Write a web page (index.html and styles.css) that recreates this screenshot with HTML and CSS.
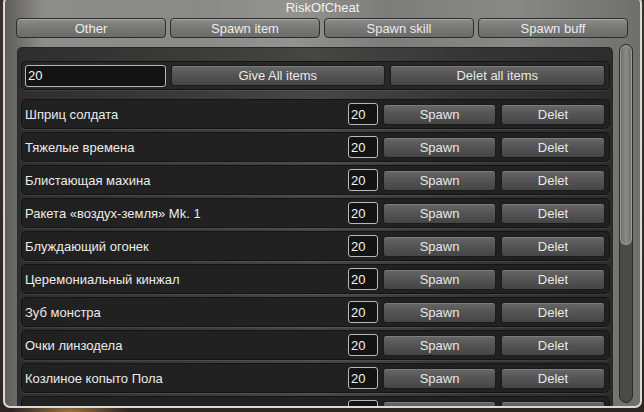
FILE: index.html
```html
<!DOCTYPE html>
<html lang="ru">
<head>
    <meta charset="UTF-8">
    <title>RiskOfCheat</title>
    <link rel="stylesheet" href="styles.css">
</head>
<body>
    <div class="window">
        <div class="title">RiskOfCheat</div>
        <div class="tabs">
            <button class="tab">Other</button>
            <button class="tab">Spawn item</button>
            <button class="tab">Spawn skill</button>
            <button class="tab">Spawn buff</button>
        </div>
        <div class="content">
            <div class="scroll-view">
                <div class="top-row">
                    <input class="field wide" value="20">
                    <button class="btn give">Give All items</button>
                    <button class="btn delall">Delet all items</button>
                </div>
                <div id="items"></div>
            </div>
            <div class="scrollbar"><div class="thumb"></div></div>
        </div>
    </div>

    <script>
        const items = [
            "Шприц солдата",
            "Тяжелые времена",
            "Блистающая махина",
            "Ракета «воздух-земля» Mk. 1",
            "Блуждающий огонек",
            "Церемониальный кинжал",
            "Зуб монстра",
            "Очки линзодела",
            "Козлиное копыто Пола",
            "Личный щит-генератор"
        ];

        const list = document.getElementById("items");
        items.forEach(function (name) {
            let row = document.createElement("div");
            row.classList.add("item-row");
            row.innerHTML = `<span class="item-name">${name}</span>
                             <input class="field small" value="20">
                             <button class="btn spawn">Spawn</button>
                             <button class="btn delet">Delet</button>`;
            list.appendChild(row);
        });
    </script>
</body>
</html>
```

FILE: styles.css
```css
body {
    margin: 0;
    width: 644px;
    height: 412px;
    overflow: hidden;
    font-family: "Liberation Sans", Arial, sans-serif;
    font-size: 13px;
    background: radial-gradient(ellipse 60px 14px at 70px 412px, #9a7440, transparent),
                linear-gradient(#3a302c, #2e2522);
}
.window {
    box-sizing: border-box;
    margin-left: 3px;
    margin-top: -4px;
    width: 639px;
    height: 412px;
    border: 2px solid #d9d9d6;
    border-radius: 7px;
    background: linear-gradient(90deg, #5f5d5b 0%, #8d8d89 6%, #8a8a86 30%, #93938f 45%, #7d7d7a 60%, #888884 80%, #6f6f6c 100%);
    display: flex;
    flex-direction: column;
    overflow: hidden;
}
.title {
    height: 18px;
    line-height: 16px;
    padding-top: 2px;
    text-align: center;
    color: #f2f2f2;
}
.tabs {
    display: flex;
    gap: 4px;
    padding-left: 11px;
    height: 20px;
}
.tab {
    width: 150px;
    height: 20px;
    padding: 0;
    font: inherit;
    color: #ececec;
    border: 1px solid #2c2c2c;
    border-radius: 4px;
    background: linear-gradient(#8c8c89, #777775 50%, #6b6b69);
    box-shadow: inset 0 1px 0 rgba(255, 255, 255, 0.25);
}
.content {
    display: flex;
    gap: 6px;
    padding: 6px 0 0 12px;
    flex: 1;
    min-height: 0;
}
.scroll-view {
    box-sizing: border-box;
    width: 596px;
    margin-top: 3px;
    padding: 13px 2px 0 3px;
    border: 1px solid #262626;
    border-bottom: none;
    border-radius: 5px 5px 0 0;
    background: linear-gradient(90deg, #2e2e2e 0%, #3b3b3a 30%, #464645 50%, #363636 75%, #2c2c2c 100%);
    overflow: hidden;
}
.top-row, .item-row {
    box-sizing: border-box;
    display: flex;
    align-items: center;
    border: 1px solid #141414;
    border-radius: 5px;
    background: #212121;
    box-shadow: 0 1px 0 rgba(255, 255, 255, 0.08);
}
.top-row {
    height: 29px;
    padding: 0 4px 0 3px;
    margin-bottom: 9px;
    background: #272727;
}
.item-row {
    height: 30px;
    padding: 0 4px 0 3px;
    margin-bottom: 3px;
}
.item-name {
    flex: 1;
    color: #ececec;
}
.field {
    box-sizing: border-box;
    font: inherit;
    color: #f4f4f4;
    background: #131313;
    border: 1px solid #b9b9b9;
    border-radius: 3px;
    padding: 0 0 0 2px;
    outline: none;
}
.field.wide {
    width: 141px;
    height: 22px;
}
.field.small {
    width: 30px;
    height: 22px;
}
.btn {
    box-sizing: border-box;
    height: 21px;
    padding: 0;
    font: inherit;
    color: #e8e8e8;
    border: 1px solid #1b1b1b;
    border-radius: 3px;
    background: linear-gradient(#676767, #555555 45%, #454545);
    box-shadow: inset 0 1px 0 rgba(255, 255, 255, 0.15);
}
.give {
    width: 214px;
    margin-left: 5px;
}
.delall {
    width: 216px;
    margin-left: 5px;
}
.spawn {
    width: 113px;
    margin-left: 5px;
}
.delet {
    width: 104px;
    margin-left: 5px;
}
.scrollbar {
    box-sizing: border-box;
    width: 14px;
    height: 359px;
    border: 1px solid #2a2a2a;
    border-radius: 7px;
    background: #4a4a49;
    overflow: hidden;
}
.thumb {
    height: 200px;
    border-radius: 6px;
    background: linear-gradient(90deg, #6a6a68, #8a8a87 50%, #6c6c6a);
    box-shadow: inset 0 0 0 1px #999;
}
```
